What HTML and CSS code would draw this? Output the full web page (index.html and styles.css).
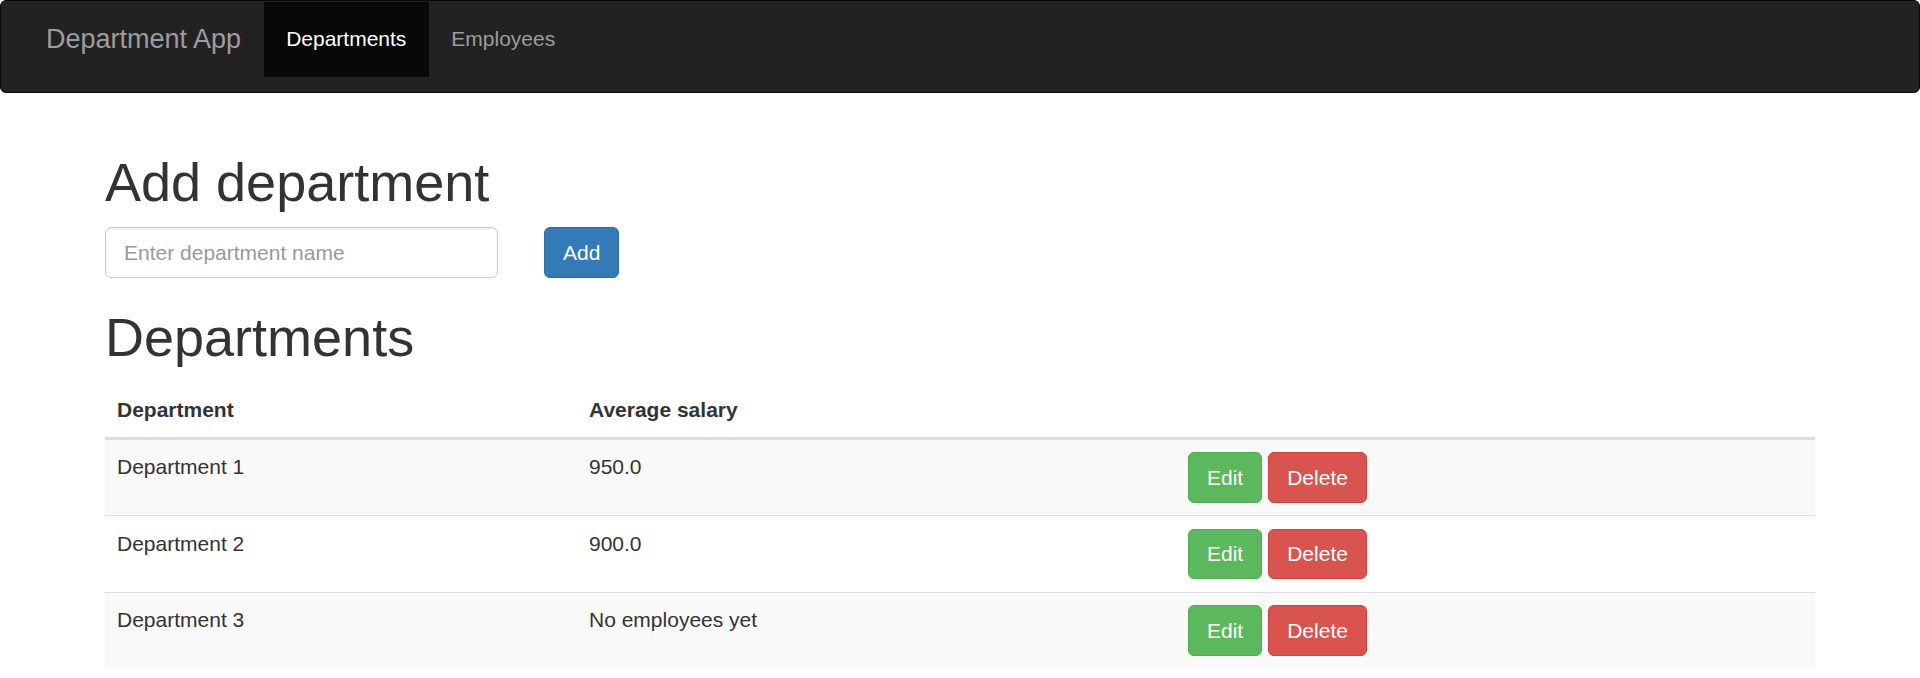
FILE: index.html
```html
<!DOCTYPE html>
<html lang="en">
<head>
<meta charset="utf-8">
<title>Department App</title>
<link rel="stylesheet" href="styles.css">
</head>
<body>
<nav class="navbar">
  <div class="navbar-inner">
    <a class="brand" href="#">Department App</a>
    <ul class="nav">
      <li class="nav-item active"><a href="#">Departments</a></li>
      <li class="nav-item"><a href="#">Employees</a></li>
    </ul>
  </div>
</nav>
<main class="container">
  <h1 class="title">Add department</h1>
  <form class="add-form">
    <input class="form-control" type="text" placeholder="Enter department name">
    <button class="btn btn-primary" type="button">Add</button>
  </form>
  <h1 class="title">Departments</h1>
  <table class="table">
    <thead>
      <tr>
        <th class="col-name">Department</th>
        <th class="col-salary">Average salary</th>
        <th class="col-actions"></th>
      </tr>
    </thead>
    <tbody>
      <tr>
        <td>Department 1</td>
        <td>950.0</td>
        <td><div class="actions"><button class="btn btn-success" type="button">Edit</button><button class="btn btn-danger" type="button">Delete</button></div></td>
      </tr>
      <tr>
        <td>Department 2</td>
        <td>900.0</td>
        <td><div class="actions"><button class="btn btn-success" type="button">Edit</button><button class="btn btn-danger" type="button">Delete</button></div></td>
      </tr>
      <tr>
        <td>Department 3</td>
        <td>No employees yet</td>
        <td><div class="actions"><button class="btn btn-success" type="button">Edit</button><button class="btn btn-danger" type="button">Delete</button></div></td>
      </tr>
    </tbody>
  </table>
</main>
</body>
</html>
```
FILE: styles.css
```css
* { box-sizing: border-box; }

html, body {
  margin: 0;
  padding: 0;
  background: #fff;
}

body {
  font-family: "Liberation Sans", Arial, Helvetica, sans-serif;
  font-size: 21px;
  line-height: 30px;
  color: #333;
}

a { text-decoration: none; }

/* Navbar */
.navbar {
  height: 93px;
  background: #222;
  border: 1px solid #080808;
  border-radius: 6px;
  margin-bottom: 30px;
}

.navbar-inner {
  display: flex;
  align-items: flex-start;
  padding: 0.5px 22.5px 0;
}

.brand {
  display: block;
  height: 75px;
  padding: 22.5px;
  font-size: 27px;
  line-height: 30px;
  color: #9d9d9d;
}

.nav {
  display: flex;
  list-style: none;
  margin: 0;
  padding: 0;
}

.nav-item a {
  display: block;
  height: 75px;
  padding: 22.5px;
  font-size: 21px;
  line-height: 30px;
  color: #9d9d9d;
}

.nav-item.active a {
  background: #080808;
  color: #fff;
}

/* Content */
.container {
  width: 1710px;
  margin: 0 auto;
  display: flow-root;
}

.title {
  font-size: 54px;
  font-weight: 500;
  line-height: 1.1;
  margin: 30px 0 15px;
}

.add-form {
  display: flex;
  align-items: flex-start;
  gap: 46px;
  margin: 0;
}

.form-control {
  width: 393px;
  height: 51px;
  padding: 9px 18px;
  font-family: inherit;
  font-size: 21px;
  line-height: 30px;
  color: #555;
  background: #fff;
  border: 1px solid #ccc;
  border-radius: 6px;
  box-shadow: inset 0 1.5px 1.5px rgba(0, 0, 0, 0.075);
  outline: none;
}

.form-control::placeholder {
  color: #999;
}

.btn {
  display: inline-block;
  height: 50.5px;
  padding: 9px 18px;
  font-family: inherit;
  font-size: 21px;
  line-height: 30px;
  font-weight: 400;
  border: 1px solid transparent;
  border-radius: 6px;
  color: #fff;
  cursor: pointer;
  white-space: nowrap;
}

.btn-primary { background: #337ab7; border-color: #2e6da4; }
.btn-success { background: #5cb85c; border-color: #4cae4c; }
.btn-danger  { background: #d9534f; border-color: #d43f3a; }

/* Table */
.table {
  width: 1710px;
  border-collapse: collapse;
  border-spacing: 0;
  margin: 0;
}

.col-name { width: 472px; }
.col-salary { width: 599px; }

.table th {
  text-align: left;
  vertical-align: bottom;
  font-weight: 700;
  padding: 12px;
  border-bottom: 3px solid #ddd;
}

.table td {
  vertical-align: top;
  padding: 12.5px 12px 12.5px;
  border-top: 1px solid #ddd;
}

.table tbody tr:nth-child(odd) {
  background: #f9f9f9;
}

.actions {
  display: flex;
  gap: 6px;
}
```
